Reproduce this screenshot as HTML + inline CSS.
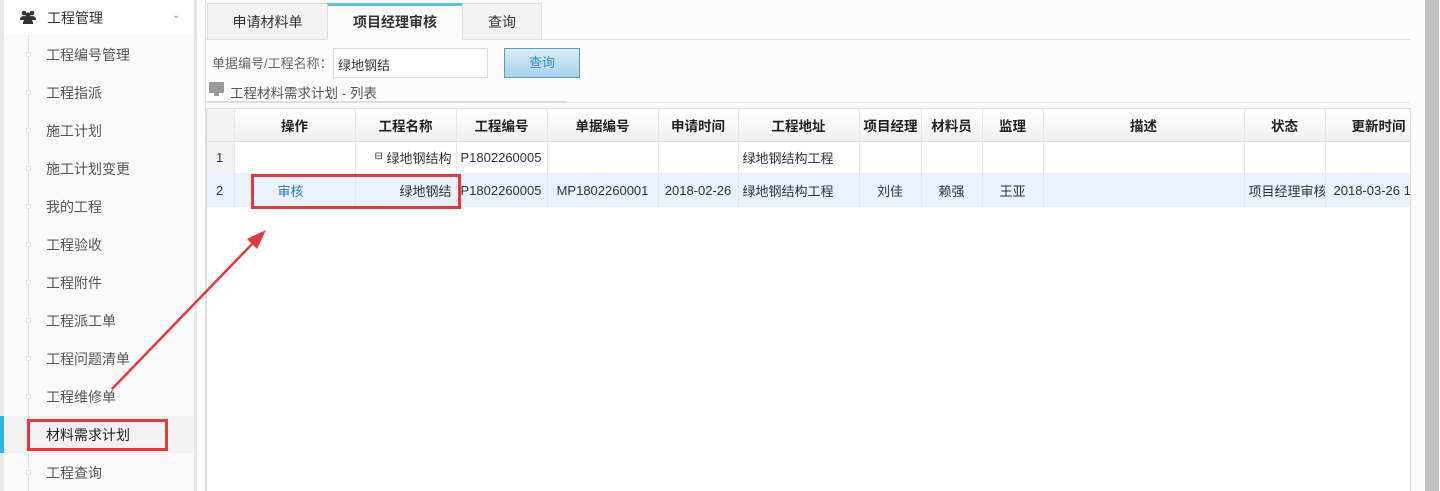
<!DOCTYPE html>
<html><head><meta charset="utf-8"><style>
*{margin:0;padding:0;box-sizing:border-box}
body{width:1440px;height:491px;overflow:hidden;background:#fcfcfc;font-family:"Liberation Sans","Noto Sans CJK SC","Microsoft YaHei",sans-serif;font-size:13px;color:#333;position:relative}
.a{position:absolute}
.side{left:0;top:0;width:197px;height:491px;background:#fafafa;border-left:4px solid #e8e8e8;border-right:3px solid #e6e6e6}
.hd{left:4px;top:0;width:189px;height:35px;background:#fff}
.item{position:absolute;left:46px;font-size:14px;color:#555}
.dot{position:absolute;left:26px;width:5px;height:5px;border:1px solid #e6e6e6;background:#fafafa}
.tab{position:absolute;top:3px;height:37px;border:1px solid #ddd;background:#f3f3f3;text-align:center;line-height:37px;font-size:14px;color:#333}
.wrap{position:absolute;left:207px;top:109px;width:1203px;height:110px;overflow:hidden}
table{border-collapse:collapse;table-layout:fixed;width:1220px}
td,th{height:32px;border-right:1px solid #e6e6e6;font-size:13px;white-space:nowrap;overflow:hidden;padding:0 4px}
th{background:linear-gradient(#fff,#f0f0f0);border-bottom:1px solid #ddd;font-weight:bold;color:#222;text-align:center;font-size:13.5px}
.rn{background:#f2f2f2;text-align:left;padding-left:9px}
tr.sel td{background:#eaf2fd;height:34px}
.red{position:absolute;border:3px solid #e03a3a}
</style></head><body>
<div class="a side"></div>
<div class="a hd"></div>
<div class="a" style="left:20px;top:10px;width:16px;height:14px">
<svg width="16" height="14" viewBox="0 0 16 14"><circle cx="4" cy="3" r="2.3" fill="#333"/><circle cx="12" cy="3" r="2.3" fill="#333"/><circle cx="8" cy="5" r="2.6" fill="#333"/><path d="M0 10c0-3 2-4 4-4s3 1 3 1H9s1-1 3-1 4 1 4 4z" fill="#333"/><path d="M3 14c0-4 2-6 5-6s5 2 5 6z" fill="#333"/></svg></div>
<div class="a" style="left:47px;top:8px;font-size:14px;color:#333">工程管理</div>
<div class="a" style="left:172px;top:10px;font-size:10px;color:#888">&#8964;</div>
<div class="a" style="left:28px;top:35px;width:1px;height:456px;background:#e4e4e4"></div>
<div class="a" style="left:4px;top:416px;width:189px;height:37px;background:#f1f1f1"></div>
<div class="a" style="left:0;top:416px;width:4px;height:37px;background:#2bb7d3"></div>
<div class="item" style="top:45px">工程编号管理</div><div class="dot" style="top:52px"></div>
<div class="item" style="top:83px">工程指派</div><div class="dot" style="top:90px"></div>
<div class="item" style="top:121px">施工计划</div><div class="dot" style="top:128px"></div>
<div class="item" style="top:159px">施工计划变更</div><div class="dot" style="top:166px"></div>
<div class="item" style="top:197px">我的工程</div><div class="dot" style="top:204px"></div>
<div class="item" style="top:235px">工程验收</div><div class="dot" style="top:242px"></div>
<div class="item" style="top:273px">工程附件</div><div class="dot" style="top:280px"></div>
<div class="item" style="top:311px">工程派工单</div><div class="dot" style="top:318px"></div>
<div class="item" style="top:349px">工程问题清单</div><div class="dot" style="top:356px"></div>
<div class="item" style="top:387px">工程维修单</div><div class="dot" style="top:394px"></div>
<div class="item" style="top:425px;color:#222">材料需求计划</div>
<div class="item" style="top:463px">工程查询</div><div class="dot" style="top:470px"></div>

<div class="a" style="left:205px;top:0;width:1px;height:491px;background:#ddd"></div>
<div class="a" style="left:206px;top:39px;width:1204px;height:1px;background:#ddd"></div>
<div class="tab" style="left:207px;width:121px">申请材料单</div>
<div class="tab" style="left:327px;width:136px;background:#fcfcfc;border-bottom-color:#fcfcfc;border-top:3px solid #5bc0de;font-weight:bold;line-height:33px">项目经理审核</div>
<div class="tab" style="left:462px;width:80px">查询</div>

<div class="a" style="left:212px;top:53px;color:#666">单据编号/工程名称：</div>
<div class="a" style="left:333px;top:48px;width:155px;height:30px;border:1px solid #ddd;background:#fff;padding:6px 4px;color:#333">绿地钢结</div>
<div class="a" style="left:504px;top:48px;width:76px;height:30px;border:1px solid #5a9bbf;background:linear-gradient(#d9eef9,#a6d2ea);color:#3a8fc0;text-align:center;line-height:28px">查询</div>

<div class="a" style="left:209px;top:82px;width:15px;height:11px;background:#999;border-radius:1px"></div>
<div class="a" style="left:214px;top:93px;width:5px;height:3px;background:#999"></div>
<div class="a" style="left:230px;top:82px;color:#555;font-size:13.5px">工程材料需求计划 - 列表</div>
<div class="a" style="left:207px;top:101px;width:360px;height:2px;background:#ddd"></div>
<div class="a" style="left:567px;top:102px;width:843px;height:1px;background:#e6e6e6"></div>

<div class="a" style="left:206px;top:108px;width:1205px;height:383px;background:#fff;border:1px solid #ddd;border-bottom:0"></div>
<div class="wrap">
<table>
<colgroup><col style="width:27px"><col style="width:121px"><col style="width:101px"><col style="width:91px"><col style="width:111px"><col style="width:80px"><col style="width:121px"><col style="width:62px"><col style="width:61px"><col style="width:61px"><col style="width:201px"><col style="width:81px"><col style="width:102px"></colgroup>
<tr><th class="rn"></th><th>操作</th><th>工程名称</th><th>工程编号</th><th>单据编号</th><th>申请时间</th><th>工程地址</th><th>项目经理</th><th>材料员</th><th>监理</th><th>描述</th><th>状态</th><th style="text-align:left;padding-left:26px">更新时间</th></tr>
<tr><td class="rn">1</td><td></td><td style="text-align:right"><span style="font-size:10px;vertical-align:4px">&#8863;</span> 绿地钢结构</td><td>P1802260005</td><td></td><td></td><td>绿地钢结构工程</td><td></td><td></td><td></td><td></td><td></td><td></td></tr>
<tr class="sel"><td style="padding-left:9px">2</td><td style="color:#2a7ab0;padding-left:43px">审核</td><td style="text-align:right">绿地钢结</td><td>P1802260005</td><td style="text-align:center">MP1802260001</td><td style="text-align:center">2018-02-26</td><td>绿地钢结构工程</td><td style="text-align:center">刘佳</td><td style="text-align:center">赖强</td><td style="text-align:center">王亚</td><td></td><td style="text-align:center">项目经理审核</td><td style="padding-left:8px">2018-03-26 1</td></tr>
</table>
</div>

<div class="red" style="left:251px;top:174px;width:210px;height:35px"></div>
<div class="red" style="left:27px;top:419px;width:141px;height:32px"></div>
<svg class="a" style="left:0;top:0" width="400" height="491"><line x1="112" y1="389" x2="255" y2="241" stroke="#e53a3a" stroke-width="2.5"/><polygon points="266,230 247,239 257,249" fill="#e53a3a"/></svg>

<div class="a" style="left:1425px;top:0;width:14px;height:491px;background:#c1c1c1"></div>
</body></html>
